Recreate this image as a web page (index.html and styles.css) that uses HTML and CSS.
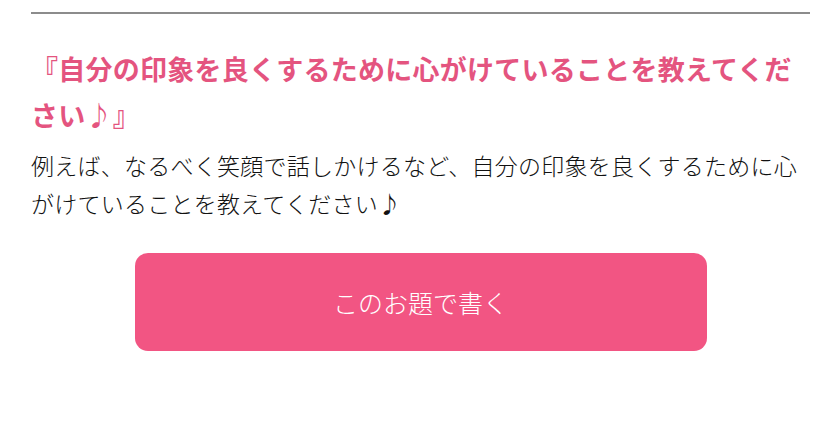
FILE: index.html
```html
<!DOCTYPE html>
<html lang="ja">
<head>
    <meta charset="UTF-8">
    <meta name="viewport" content="width=device-width, initial-scale=1.0">
    <title>お題</title>
    <link rel="stylesheet" href="styles.css">
</head>
<body>
    <div class="topic">
        <hr class="topic-line">
        <h2 class="topic-title">『自分の印象を良くするために心がけていることを教えてください♪』</h2>
        <p class="topic-text">例えば、なるべく笑顔で話しかけるなど、自分の印象を良くするために心がけていることを教えてください♪</p>
        <a href="#" class="topic-button">このお題で書く</a>
    </div>
</body>
</html>
```

FILE: styles.css
```css
*{
    margin:0;
    padding:0;
    box-sizing:border-box;
}
body{
    background-color:#fff;
    font-family:"Noto Sans CJK JP", "Noto Sans", sans-serif;
    color:#111;
}
.topic{
    padding:12px 30px 0 31px;
}
.topic-line{
    border:none;
    border-top:2px solid #8c8c8c;
}
.topic-title{
    margin-top:32px;
    font-size:27px;
    line-height:46px;
    letter-spacing:0.25px;
    font-weight:bold;
    color:#e4547f;
}
.topic-text{
    margin-top:8px;
    font-size:23px;
    line-height:38px;
    letter-spacing:0.25px;
    font-weight:300;
}
.topic-button{
    display:flex;
    align-items:center;
    justify-content:center;
    width:572px;
    height:98px;
    margin:31px auto 0;
    background-color:#f25583;
    border-radius:13px;
    color:#fff;
    font-size:25px;
    font-weight:300;
    text-decoration:none;
}
```
